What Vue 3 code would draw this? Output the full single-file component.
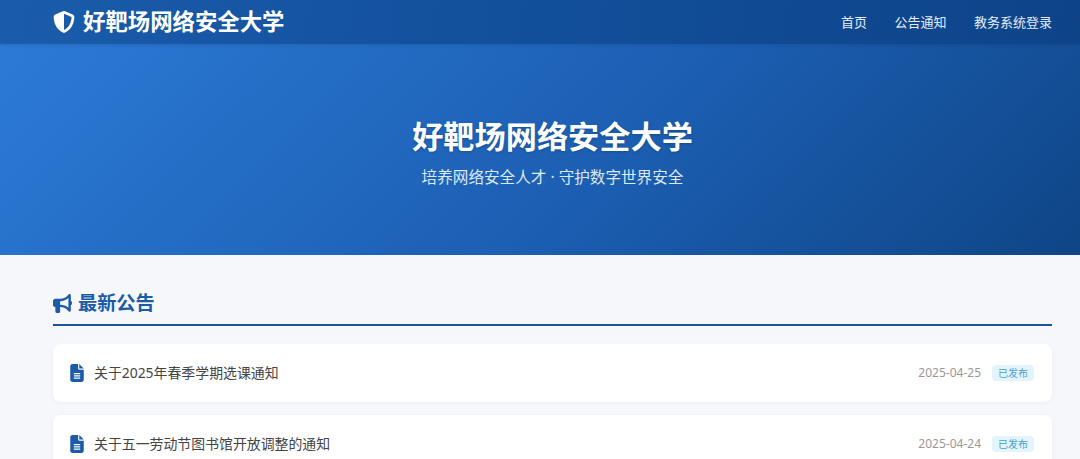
<script setup>
const notices = [
  { title: '关于2025年春季学期选课通知', date: '2025-04-25' },
  { title: '关于五一劳动节图书馆开放调整的通知', date: '2025-04-24' }
]
const links = ['首页', '公告通知', '教务系统登录']
</script>

<template>
  <div class="page">
    <header class="topbar">
      <div class="container bar-inner">
        <div class="logo">
          <svg class="logo-icon" viewBox="0 0 512 512"><path fill="currentColor" d="M256 0c4.6 0 9.2 1 13.4 2.9L457.7 82.8c22 9.3 38.4 31 38.3 57.2c-.5 99.2-41.3 280.7-213.6 363.2c-16.7 8-36.1 8-52.8 0C57.3 420.7 16.5 239.2 16 140c-.1-26.2 16.3-47.9 38.3-57.2L242.7 2.9C246.8 1 251.4 0 256 0zm0 66.8V444.8C394 378 431.1 230.1 432 141.4L256 66.8l0 0z"/></svg>
          <span>好靶场网络安全大学</span>
        </div>
        <nav class="nav">
          <a v-for="l in links" :key="l">{{ l }}</a>
        </nav>
      </div>
    </header>

    <section class="hero">
      <div class="container hero-inner">
        <h1>好靶场网络安全大学</h1>
        <p>培养网络安全人才 · 守护数字世界安全</p>
      </div>
    </section>

    <main class="container main">
      <h2 class="section-title">
        <svg class="horn" viewBox="0 0 512 512"><path fill="currentColor" d="M480 32c0-12.9-7.8-24.6-19.8-29.6s-25.7-2.2-34.9 6.9L381.7 53c-48 48-113.1 75-181 75H192 160 64c-35.3 0-64 28.7-64 64v96c0 35.3 28.7 64 64 64l0 128c0 17.7 14.3 32 32 32h64c17.7 0 32-14.3 32-32V352l8.7 0c67.9 0 133 27 181 75l43.6 43.6c9.2 9.2 22.9 11.9 34.9 6.9s19.8-16.6 19.8-29.6V300.4c18.6-8.8 32-32.5 32-60.4s-13.4-51.6-32-60.4V32zm-64 76.7V240 371.3C357.2 317.8 280.5 288 200.7 288H192V192h8.7c79.8 0 156.5-29.8 215.3-83.3z"/></svg>
        <span>最新公告</span>
      </h2>
      <ul class="list">
        <li v-for="n in notices" :key="n.date" class="card">
          <svg class="file" viewBox="0 0 384 512"><path fill="currentColor" d="M64 0C28.7 0 0 28.7 0 64V448c0 35.3 28.7 64 64 64H320c35.3 0 64-28.7 64-64V160H256c-17.7 0-32-14.3-32-32V0H64zM256 0V128H384L256 0zM112 256H272c8.8 0 16 7.2 16 16s-7.2 16-16 16H112c-8.8 0-16-7.2-16-16s7.2-16 16-16zm0 64H272c8.8 0 16 7.2 16 16s-7.2 16-16 16H112c-8.8 0-16-7.2-16-16s7.2-16 16-16zm0 64H272c8.8 0 16 7.2 16 16s-7.2 16-16 16H112c-8.8 0-16-7.2-16-16s7.2-16 16-16z"/></svg>
          <span class="title">{{ n.title }}</span>
          <span class="date">{{ n.date }}</span>
          <span class="badge">已发布</span>
        </li>
      </ul>
    </main>
  </div>
</template>

<style>
html, body { margin: 0; overflow: hidden; }
</style>

<style scoped>
.page {
  width: 1080px;
  height: 459px;
  overflow: hidden;
  background: #f5f7fa;
  font-family: "Noto Sans", "Noto Sans CJK SC", sans-serif;
}
.container {
  width: 999px;
  margin-left: 53px;
  box-sizing: border-box;
}
.topbar {
  height: 44px;
  background: linear-gradient(100deg, #1a5cab 0%, #124f9b 50%, #0e4388 100%);
  box-shadow: 0 1px 4px rgba(0, 0, 0, .12);
  position: relative;
}
.bar-inner {
  height: 44px;
  display: flex;
  align-items: center;
  justify-content: space-between;
}
.logo {
  display: flex;
  align-items: center;
  gap: 8px;
  color: #fff;
  font-size: 22.4px;
  line-height: 44px;
  font-weight: 700;
  white-space: nowrap;
}
.logo-icon { width: 22px; height: 22px; }
.nav { display: flex; gap: 27.5px; }
.nav a { color: #e4edf8; font-size: 13px; line-height: 44px; }
.hero {
  height: 211px;
  background: linear-gradient(135deg, #2c7ad6 0%, #1c5fb3 55%, #0f4586 100%);
  color: #fff;
}
.hero-inner {
  height: 100%;
  display: flex;
  flex-direction: column;
  align-items: center;
  padding-top: 69px;
}
h1 {
  margin: 0;
  font-size: 31.2px;
  line-height: 46px;
  font-weight: 700;
  text-shadow: 0 1px 3px rgba(0, 0, 0, .2);
}
.hero p {
  margin: 6px 0 0;
  font-size: 15.6px;
  line-height: 24px;
  color: #dde8f6;
}
.main { padding-top: 35px; }
.section-title {
  margin: 0;
  height: 34px;
  display: flex;
  align-items: flex-start;
  gap: 6px;
  color: #1c5ba8;
  font-size: 19.2px;
  line-height: 26px;
  font-weight: 700;
  border-bottom: 2px solid #1c5499;
}
.horn { width: 19px; height: 19px; margin-top: 4px; }
.list {
  list-style: none;
  margin: 18px 0 0;
  padding: 0;
  display: flex;
  flex-direction: column;
  gap: 13px;
}
.card {
  height: 58px;
  background: #fff;
  border-radius: 8px;
  box-shadow: 0 1px 4px rgba(0, 0, 0, .04);
  display: flex;
  align-items: center;
  padding: 0 18px 0 17px;
}
.file { width: 14px; height: 18px; color: #1c5ba8; flex: none; margin-right: 10px; }
.title { flex: 1; font-size: 13.9px; line-height: 20px; color: #444; }
.date { font-size: 12px; line-height: 16px; color: #999; margin-right: 11px; }
.badge {
  width: 42px;
  height: 16px;
  line-height: 16px;
  text-align: center;
  border-radius: 4px;
  background: #e3f4fc;
  color: #4b9fd0;
  font-size: 10px;
}
</style>
